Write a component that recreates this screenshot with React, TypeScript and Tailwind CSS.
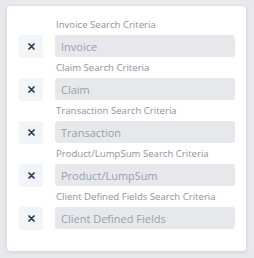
const criteria = [
  { label: 'Invoice Search Criteria', placeholder: 'Invoice' },
  { label: 'Claim Search Criteria', placeholder: 'Claim' },
  { label: 'Transaction Search Criteria', placeholder: 'Transaction' },
  { label: 'Product/LumpSum Search Criteria', placeholder: 'Product/LumpSum' },
  { label: 'Client Defined Fields Search Criteria', placeholder: 'Client Defined Fields' },
]

function XIcon() {
  return (
    <svg width="7" height="7" viewBox="0 0 7 7" fill="none">
      <path d="M1 1L6 6M6 1L1 6" stroke="#1f3a5c" strokeWidth="1.7" strokeLinecap="round" />
    </svg>
  )
}

export default function App() {
  return (
    <div className="w-[254px] h-[258px] bg-[#e7e9ed] pt-[6px] pl-[7px] font-['Open_Sans',sans-serif]">
      <div className="w-[239px] h-[245px] bg-white rounded-[4px] shadow-[0_1px_4px_rgba(0,0,0,0.12)] pt-[12px] pl-[12px] pr-[11px] flex flex-col gap-[4px]">
        {criteria.map((c) => (
          <div key={c.label} className="flex flex-col gap-[4px]">
            <div className="pl-[37px] text-[9.6px] leading-[13px] text-[#8e939d]">{c.label}</div>
            <div className="flex items-center gap-[12px] h-[22px]">
              <button className="w-[24px] h-[23px] rounded-[3px] bg-[#f3f4f6] flex items-center justify-center">
                <XIcon />
              </button>
              <input
                readOnly
                placeholder={c.placeholder}
                className="flex-1 min-w-0 h-[22px] rounded-[3px] bg-[#e6e8ec] px-[6px] text-[11px] text-[#6b7280] placeholder:text-[#9ba0a8] outline-none"
              />
            </div>
          </div>
        ))}
      </div>
    </div>
  )
}
